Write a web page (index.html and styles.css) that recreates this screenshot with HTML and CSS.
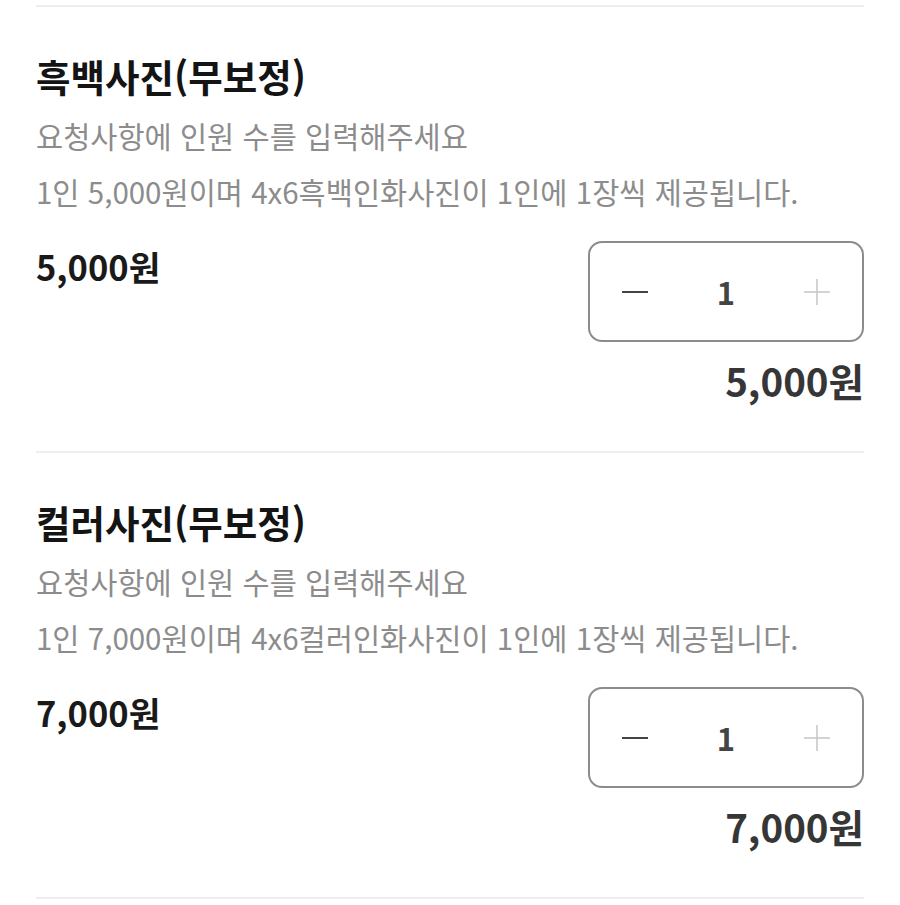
FILE: index.html
```html
<!DOCTYPE html>
<html lang="ko">
<head>
<meta charset="utf-8">
<link rel="stylesheet" href="styles.css">
</head>
<body>
<div class="list">
  <section class="item">
    <h2 class="title">흑백사진(무보정)</h2>
    <p class="desc">요청사항에 인원 수를 입력해주세요</p>
    <p class="desc">1인 5,000원이며 4x6흑백인화사진이 1인에 1장씩 제공됩니다.</p>
    <div class="row">
      <div class="price">5,000원</div>
      <div class="order">
        <div class="stepper">
          <button class="step minus" aria-label="감소"><svg width="28" height="28" viewBox="0 0 28 28"><line x1="1" y1="14" x2="27" y2="14" stroke="#444" stroke-width="2"/></svg></button>
          <span class="qty">1</span>
          <button class="step plus" aria-label="증가"><svg width="28" height="28" viewBox="0 0 28 28"><line x1="1" y1="14" x2="27" y2="14" stroke="#c9c9c9" stroke-width="1.6"/><line x1="14" y1="1" x2="14" y2="27" stroke="#c9c9c9" stroke-width="1.6"/></svg></button>
        </div>
        <div class="total">5,000원</div>
      </div>
    </div>
  </section>
  <section class="item">
    <h2 class="title">컬러사진(무보정)</h2>
    <p class="desc">요청사항에 인원 수를 입력해주세요</p>
    <p class="desc">1인 7,000원이며 4x6컬러인화사진이 1인에 1장씩 제공됩니다.</p>
    <div class="row">
      <div class="price">7,000원</div>
      <div class="order">
        <div class="stepper">
          <button class="step minus" aria-label="감소"><svg width="28" height="28" viewBox="0 0 28 28"><line x1="1" y1="14" x2="27" y2="14" stroke="#444" stroke-width="2"/></svg></button>
          <span class="qty">1</span>
          <button class="step plus" aria-label="증가"><svg width="28" height="28" viewBox="0 0 28 28"><line x1="1" y1="14" x2="27" y2="14" stroke="#c9c9c9" stroke-width="1.6"/><line x1="14" y1="1" x2="14" y2="27" stroke="#c9c9c9" stroke-width="1.6"/></svg></button>
        </div>
        <div class="total">7,000원</div>
      </div>
    </div>
  </section>
</div>
</body>
</html>
```
FILE: styles.css
```css
* { box-sizing: border-box; }
html, body { margin: 0; padding: 0; background: #fff; }
body {
  font-family: "Noto Sans CJK KR", "Noto Sans", sans-serif;
  color: #111;
}
.list {
  margin: 0 36px;
  padding-top: 5px;
}
.item {
  border-bottom: 2px solid #eeeeee;
  padding: 45px 0 49px;
}
.item:first-child {
  border-top: 2px solid #eeeeee;
}
.title {
  margin: 0 0 7px;
  font-size: 37.5px;
  line-height: 48px;
  font-weight: 700;
  letter-spacing: 0;
  color: #141414;
}
.desc {
  margin: 0;
  font-size: 29.5px;
  line-height: 56px;
  font-weight: 400;
  letter-spacing: 0;
  color: #8c8c8c;
}
.row {
  display: flex;
  justify-content: space-between;
  align-items: flex-start;
  margin-top: 22px;
}
.price {
  padding-top: 5px;
  font-size: 34.5px;
  line-height: 40px;
  font-weight: 700;
  color: #1a1a1a;
}
.order {
  display: flex;
  flex-direction: column;
  align-items: flex-end;
}
.stepper {
  width: 276px;
  height: 101px;
  border: 2px solid #8c8c8c;
  border-radius: 14px;
  display: grid;
  grid-template-columns: 1fr 1fr 1fr;
  align-items: center;
  justify-items: center;
}
.step {
  border: 0;
  background: none;
  padding: 0;
  display: flex;
  align-items: center;
  justify-content: center;
  width: 40px;
  height: 40px;
}
.qty {
  font-size: 31px;
  font-weight: 700;
  color: #444;
  line-height: 40px;
}
.total {
  margin-top: 16px;
  font-size: 38.5px;
  line-height: 44px;
  font-weight: 700;
  color: #363636;
}
```
